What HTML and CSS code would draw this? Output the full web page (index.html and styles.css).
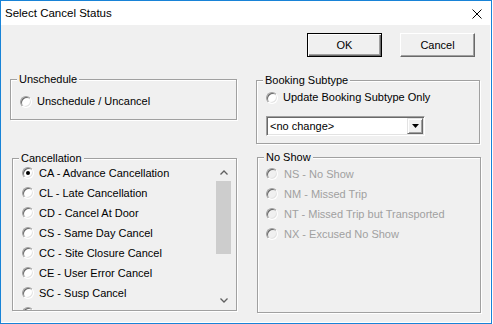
FILE: index.html
```html
<!DOCTYPE html>
<html>
<head>
<meta charset="utf-8">
<title>Select Cancel Status</title>
<link rel="stylesheet" href="styles.css">
</head>
<body>
<div class="window">
  <div class="titlebar">
    <span class="title">Select Cancel Status</span>
    <svg class="close" width="10" height="10" viewBox="0 0 10 10"><path d="M0.5 0.5 L9.5 9.5 M9.5 0.5 L0.5 9.5" stroke="#000" stroke-width="1" fill="none"/></svg>
  </div>
  <div class="content">
    <div class="buttons">
      <button class="btn btn-default">OK</button>
      <button class="btn">Cancel</button>
    </div>
    <div class="columns">
      <div class="col">
        <div class="group g-unsched">
          <div class="legend">Unschedule</div>
          <div class="opt opt-first"><span class="radio"></span><span>Unschedule / Uncancel</span></div>
        </div>
        <div class="group g-cancel">
          <div class="legend">Cancellation</div>
          <div class="list">
            <div class="items">
              <div class="row"><span class="radio checked"></span><span>CA - Advance Cancellation</span></div>
              <div class="row"><span class="radio"></span><span>CL - Late Cancellation</span></div>
              <div class="row"><span class="radio"></span><span>CD - Cancel At Door</span></div>
              <div class="row"><span class="radio"></span><span>CS - Same Day Cancel</span></div>
              <div class="row"><span class="radio"></span><span>CC - Site Closure Cancel</span></div>
              <div class="row"><span class="radio"></span><span>CE - User Error Cancel</span></div>
              <div class="row"><span class="radio"></span><span>SC - Susp Cancel</span></div>
              <div class="row"><span class="radio"></span><span></span></div>
            </div>
            <div class="scrollbar">
              <div class="sb-btn"><svg width="8" height="5" viewBox="0 0 8 5"><path d="M0.5 4.5 L4 1 L7.5 4.5" stroke="#606060" stroke-width="1.3" fill="none"/></svg></div>
              <div class="sb-thumb"></div>
              <div class="sb-track"></div>
              <div class="sb-btn"><svg width="8" height="5" viewBox="0 0 8 5"><path d="M0.5 0.5 L4 4 L7.5 0.5" stroke="#606060" stroke-width="1.3" fill="none"/></svg></div>
            </div>
          </div>
        </div>
      </div>
      <div class="col">
        <div class="group g-booking">
          <div class="legend">Booking Subtype</div>
          <div class="opt opt-booking"><span class="radio"></span><span>Update Booking Subtype Only</span></div>
          <div class="combo">
            <span class="combo-text">&lt;no change&gt;</span>
            <span class="combo-btn"><svg width="7" height="4" viewBox="0 0 7 4"><path d="M0 0 H7 L3.5 4 Z" fill="#000"/></svg></span>
          </div>
        </div>
        <div class="group g-noshow">
          <div class="legend">No Show</div>
          <div class="ns-items">
            <div class="row row-ns disabled"><span class="radio"></span><span>NS - No Show</span></div>
            <div class="row row-ns disabled"><span class="radio"></span><span>NM - Missed Trip</span></div>
            <div class="row row-ns disabled"><span class="radio"></span><span>NT - Missed Trip but Transported</span></div>
            <div class="row row-ns disabled"><span class="radio"></span><span>NX - Excused No Show</span></div>
          </div>
        </div>
      </div>
    </div>
  </div>
</div>
</body>
</html>
```

FILE: styles.css
```css
html, body {
  margin: 0;
  padding: 0;
  background: #fff;
}

body {
  font-family: "Liberation Sans", Arial, sans-serif;
  font-size: 11px;
  color: #000;
}

.window {
  width: 492px;
  height: 324px;
  box-sizing: border-box;
  border: 1px solid #1883d7;
  display: flex;
  flex-direction: column;
  background: #fff;
}

.titlebar {
  height: 24px;
  flex: none;
  display: flex;
  align-items: center;
  justify-content: space-between;
  padding: 0 9px 0 4px;
  background: #fff;
}

.title {
  font-size: 11.5px;
  line-height: 14px;
}

.close {
  display: block;
  margin-top: 2px;
}

.content {
  flex: 1;
  background: #f0f0f0;
  padding: 8px 16px 0 9px;
  box-shadow: inset -1px -1px 0 #fff;
}

.buttons {
  display: flex;
  justify-content: flex-end;
  gap: 18px;
}

.btn {
  width: 75px;
  height: 24px;
  box-sizing: border-box;
  margin: 0;
  padding: 0;
  font-family: inherit;
  font-size: 11px;
  color: #000;
  background: #f0f0f0;
  border: 1px solid;
  border-color: #fff #696969 #696969 #fff;
  box-shadow: inset -1px -1px 0 #a0a0a0;
}

.btn-default {
  border: 1px solid #000;
  box-shadow: inset 1px 1px 0 #fff, inset -1px -1px 0 #696969, inset -2px -2px 0 #a0a0a0;
}

.columns {
  display: grid;
  grid-template-columns: 227px 225px;
  column-gap: 19px;
  margin-top: 22px;
  align-items: start;
}

.group {
  box-sizing: border-box;
  border: 1px solid #a0a0a0;
  box-shadow: 1px 1px 0 #fff, inset 1px 1px 0 #fff;
}

.legend {
  display: table;
  margin: -7px 0 0 6px;
  padding: 0 2px;
  line-height: 13px;
  background: #f0f0f0;
}

.g-unsched {
  width: 227px;
  height: 41px;
}

.g-cancel {
  width: 225px;
  height: 153px;
  margin: 38px 0 0 2px;
}

.g-booking {
  width: 224px;
  height: 64px;
  margin-top: 1px;
}

.g-noshow {
  width: 224px;
  height: 156px;
  margin: 13px 0 0 1px;
}

.opt {
  display: flex;
  align-items: center;
  gap: 5px;
  height: 13px;
  padding-left: 9px;
  line-height: 13px;
}

.opt-first {
  margin-top: 9px;
}

.opt-booking {
  margin-top: 4px;
}

.radio {
  flex: none;
  width: 12px;
  height: 12px;
  box-sizing: border-box;
  border-radius: 50%;
  background: #fff;
  border: 1px solid;
  border-color: #a0a0a0 #fff #fff #a0a0a0;
  box-shadow: inset 1px 1px 0 #696969, inset -1px -1px 0 #e3e3e3;
  display: flex;
  align-items: center;
  justify-content: center;
}

.radio.checked::after {
  content: "";
  width: 4px;
  height: 4px;
  border-radius: 50%;
  background: #000;
}

.disabled {
  color: #a0a0a0;
}

.disabled .radio {
  background: #f0f0f0;
}

.combo {
  width: 159px;
  height: 20px;
  box-sizing: border-box;
  margin: 12px 0 0 9px;
  display: flex;
  align-items: center;
  background: #fff;
  border: 1px solid;
  border-color: #a0a0a0 #fff #fff #a0a0a0;
  padding: 1px;
  box-shadow: inset 1px 1px 0 #696969, inset -1px -1px 0 #e3e3e3;
}

.combo-text {
  flex: 1;
  padding-left: 2px;
  line-height: 16px;
}

.combo-btn {
  width: 16px;
  height: 16px;
  box-sizing: border-box;
  display: flex;
  align-items: center;
  justify-content: center;
  background: #f0f0f0;
  border: 1px solid;
  border-color: #e3e3e3 #696969 #696969 #e3e3e3;
  box-shadow: inset 1px 1px 0 #fff, inset -1px -1px 0 #a0a0a0;
}

.list {
  display: flex;
  height: 147px;
  margin: -2px 4px 0 0;
  overflow: hidden;
}

.items {
  flex: 1;
  overflow: hidden;
  padding-left: 9px;
}

.row {
  display: flex;
  align-items: center;
  gap: 5px;
  height: 20px;
  line-height: 13px;
  white-space: nowrap;
}

.row-ns {
  gap: 6px;
}

.ns-items {
  padding-left: 8px;
}

.scrollbar {
  flex: none;
  width: 17px;
  display: flex;
  flex-direction: column;
  padding: 1px 0;
  box-sizing: border-box;
  background: #f0f0f0;
}

.sb-btn {
  height: 17px;
  flex: none;
  display: flex;
  align-items: center;
  justify-content: center;
}

.sb-thumb {
  height: 73px;
  flex: none;
  margin: 0 1px;
  background: #cdcdcd;
}

.sb-track {
  flex: 1;
}
```
